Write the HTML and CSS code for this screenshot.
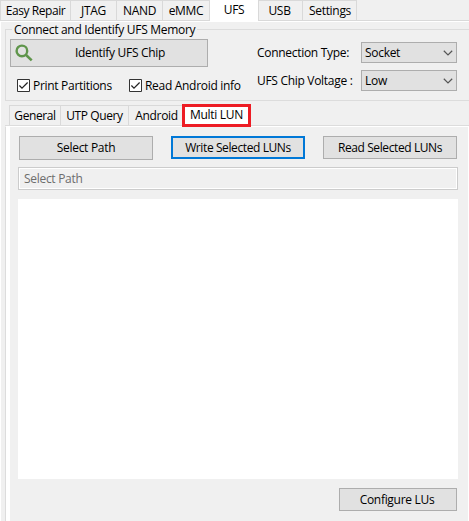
FILE: index.html
```html
<!DOCTYPE html>
<html lang="en">
<head>
<meta charset="utf-8">
<title>UFS</title>
<link rel="stylesheet" href="styles.css">
</head>
<body>
<div class="app">
  <nav class="tabs main-tabs">
    <div class="tab t-easy"><span>Easy Repair</span></div>
    <div class="tab t-jtag"><span>JTAG</span></div>
    <div class="tab t-nand"><span>NAND</span></div>
    <div class="tab t-emmc"><span>eMMC</span></div>
    <div class="tab t-ufs active"><span>UFS</span></div>
    <div class="tab t-usb"><span>USB</span></div>
    <div class="tab t-settings"><span>Settings</span></div>
  </nav>
  <main class="page">
    <section class="group">
      <div class="legend"><i class="lead"></i><span class="w-legend">Connect and Identify UFS Memory</span><i class="rule"></i></div>
      <div class="group-body">
        <div class="left">
          <button class="btn identify">
            <svg class="lens" width="18" height="18" viewBox="0 0 18 18" fill="none" stroke="#5f954b" stroke-width="2.4"><circle cx="6.9" cy="6.9" r="5.3"/><path d="M10.8 10.8L16.7 16.4" stroke-width="2.6"/></svg>
            <span>Identify UFS Chip</span>
          </button>
          <div class="checks">
            <label class="check c-print"><svg width="13" height="13" viewBox="0 0 13 13"><path fill="#fff" stroke="#333" d="M.5.5h12v12H.5z"/><path fill="none" stroke="#222" stroke-width="1.2" d="M2.4 6.5L5 9.2L10.6 3.5"/></svg><span>Print Partitions</span></label>
            <label class="check c-read"><svg width="13" height="13" viewBox="0 0 13 13"><path fill="#fff" stroke="#333" d="M.5.5h12v12H.5z"/><path fill="none" stroke="#222" stroke-width="1.2" d="M2.4 6.5L5 9.2L10.6 3.5"/></svg><span>Read Android info</span></label>
          </div>
        </div>
        <div class="right">
          <span class="w-conn">Connection Type:</span>
          <div class="select"><span class="w-socket">Socket</span><svg width="10" height="6" viewBox="0 0 10 6" fill="none" stroke="#555" stroke-width="1.2"><path d="M.8.8L5 4.9L9.2.8"/></svg></div>
          <span class="w-volt">UFS Chip Voltage :</span>
          <div class="select"><span>Low</span><svg width="10" height="6" viewBox="0 0 10 6" fill="none" stroke="#555" stroke-width="1.2"><path d="M.8.8L5 4.9L9.2.8"/></svg></div>
        </div>
      </div>
    </section>
    <nav class="tabs sub-tabs">
      <div class="tab s-general"><span>General</span></div>
      <div class="tab s-utp"><span>UTP Query</span></div>
      <div class="tab s-android"><span>Android</span></div>
      <div class="tab s-multi"><span>Multi LUN</span></div>
    </nav>
    <section class="sub-page">
      <div class="content">
        <div class="actions">
          <button class="btn b-select"><span>Select Path</span></button>
          <button class="btn b-write"><span>Write Selected LUNs</span></button>
          <button class="btn b-read"><span>Read Selected LUNs</span></button>
        </div>
        <div class="path"><span>Select Path</span></div>
        <div class="list"></div>
        <button class="btn b-config"><span>Configure LUs</span></button>
      </div>
    </section>
  </main>
</div>
</body>
</html>
```
FILE: styles.css
```css
* { box-sizing: border-box; }
body {
  margin: 0;
  background: #f0f0f0;
  color: #000;
  font: 12px/16px "Open Sans", "Noto Sans", sans-serif;
  letter-spacing: -0.3px;
  white-space: nowrap;
}
.app { width: 469px; height: 521px; overflow: hidden; display: flex; flex-direction: column; }
.tabs { display: flex; }
.tab {
  display: flex;
  justify-content: center;
  align-items: center;
  border: 1px solid #d9d9d9;
  border-left: 0;
  border-bottom: 0;
}
.main-tabs { height: 21px; flex: none; border-bottom: 1px solid #d9d9d9; }
.t-easy { width: 71px; border-left: 1px solid #d9d9d9; letter-spacing: -0.42px; }
.t-jtag { width: 46px; }
.t-nand { width: 46px; }
.t-emmc { width: 47px; }
.main-tabs .active { width: 48px; height: 21px; background: #fff; border: 0; padding-bottom: 2px; }
.t-usb { width: 45px; border-left: 1px solid #d9d9d9; padding-right: 2px; }
.t-settings { width: 54px; padding-left: 1px; }
.page { flex: 1; border-left: 1px solid #fff; border-top: 1px solid #fff; padding-left: 4px; display: flex; flex-direction: column; }
.group { height: 79px; display: flex; flex-direction: column; border-bottom: 1px solid #dcdcdc; }
.legend { height: 16px; flex: none; display: flex; align-items: flex-end; }
.lead, .rule { height: 9px; border-top: 1px solid #dcdcdc; }
.lead { width: 7px; margin-right: 2px; border-left: 1px solid #dcdcdc; }
.rule { flex: 1; margin-left: 2px; }
.group-body { flex: 1; display: flex; border-left: 1px solid #dcdcdc; padding: 1px 12px 0 4px; justify-content: space-between; }
.btn {
  display: flex;
  align-items: center;
  justify-content: center;
  height: 24px;
  padding: 0;
  background: #e1e1e1;
  border: 1px solid #adadad;
  color: #000;
  font: inherit;
  letter-spacing: inherit;
}
.identify { width: 198px; height: 28px; justify-content: flex-start; padding-left: 4px; }
.lens { margin-right: 42px; }
.checks { display: flex; padding: 10px 0 0 7px; }
.check { display: flex; align-items: center; gap: 3px; height: 17px; }
.c-print { width: 112px; }
.right { display: grid; grid-template-columns: 104px 96px; row-gap: 7px; align-items: center; padding-top: 3px; align-content: start; }
.select { height: 21px; border: 1px solid #adadad; background: #e1e1e1; display: flex; align-items: center; justify-content: space-between; padding: 0 3px; }
.sub-tabs { height: 25px; flex: none; align-items: flex-end; padding-left: 4px; border-bottom: 1px solid #dcdcdc; }
.sub-tabs .tab { height: 20px; }
.s-general { width: 52px; letter-spacing: -0.4px; }
.sub-tabs .s-general { border-left: 1px solid #d9d9d9; }
.s-utp { width: 68px; letter-spacing: -0.4px; }
.s-android { width: 53px; border-right: 0; padding-left: 2px; }
.sub-tabs .s-multi { width: 69px; height: 23px; margin-bottom: -2px; border: 3px solid #ed1c24; background: #fff; z-index: 1; padding-bottom: 1px; }
.sub-page { flex: 1; border-left: 1px solid #dcdcdc; border-top: 1px solid #fff; background: #fff; padding: 0 1px 0 4px; }
.content { height: 100%; background: #f0f0f0; padding: 9px 10px 0 8px; display: flex; flex-direction: column; }
.actions { display: flex; justify-content: space-between; padding: 0 1px; }
.actions .btn { width: 134px; }
.actions .b-write { border: 2px solid #0078d7; height: 23px; letter-spacing: -0.4px; }
.actions .b-read { height: 23px; letter-spacing: -0.4px; }
.path { margin-top: 7px; height: 23px; border: 1px solid #ccc; box-shadow: inset 0 0 0 1px #fff; padding: 3px 5px; color: #6d6d6d; line-height: 16px; }
.list { height: 280px; margin-top: 9px; background: #fff; }
.b-config { width: 118px; height: 23px; margin: 9px 1px 0 auto; padding-right: 2px; }
```
